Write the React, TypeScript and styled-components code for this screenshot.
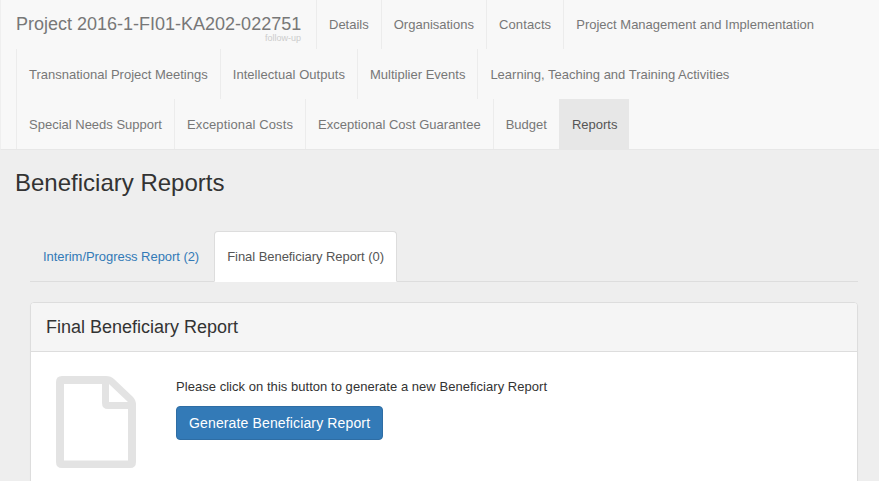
import React from 'react'
import styled, { createGlobalStyle } from 'styled-components'

const GlobalStyle = createGlobalStyle`
  html, body {
    margin: 0;
    height: 100%;
    overflow: hidden;
    background: #eeeeee;
    font-family: "Liberation Sans", Arial, sans-serif;
    font-size: 13px;
    line-height: 20px;
    color: #333333;
  }
  * {
    box-sizing: border-box;
  }
`

// tracking nudges a few labels to the widths seen in the reference
const NAV_ITEMS: { label: string; tracking?: number }[] = [
  { label: 'Details' },
  { label: 'Organisations' },
  { label: 'Contacts', tracking: 0.12 },
  { label: 'Project Management and Implementation' },
  { label: 'Transnational Project Meetings' },
  { label: 'Intellectual Outputs', tracking: 0.05 },
  { label: 'Multiplier Events' },
  { label: 'Learning, Teaching and Training Activities' },
  { label: 'Special Needs Support' },
  { label: 'Exceptional Costs', tracking: 0.12 },
  { label: 'Exceptional Cost Guarantee' },
  { label: 'Budget' },
  { label: 'Reports' },
]

const FileIcon = () => (
  <IconBox viewBox="0 0 80 92" width="80" height="92">
    <path
      fillRule="evenodd"
      fill="#e3e3e3"
      d="M6 0H50Q55 0 58 3L77 21Q80 24 80 29V86Q80 92 74 92H6Q0 92 0 86V6Q0 0 6 0ZM8 8V84.5H72V33H52Q46 33 46 27V8ZM53 8V26H72Z"
    />
  </IconBox>
)

const App: React.FC = () => {
  return (
    <>
      <GlobalStyle />
      <Navbar>
        <Brand>
          Project 2016-1-FI01-KA202-022751
          <BrandNote>follow-up</BrandNote>
        </Brand>
        {NAV_ITEMS.map((item) => (
          <NavItem key={item.label} $active={item.label === 'Reports'} $tracking={item.tracking}>
            {item.label}
          </NavItem>
        ))}
      </Navbar>
      <Page>
        <PageTitle>Beneficiary Reports</PageTitle>
        <Section>
          <Tabs>
            <Tab>Interim/Progress Report (2)</Tab>
            <Tab $active>Final Beneficiary Report (0)</Tab>
          </Tabs>
          <Panel>
            <PanelHead>Final Beneficiary Report</PanelHead>
            <PanelBody>
              <FileIcon />
              <div>
                <Hint>Please click on this button to generate a new Beneficiary Report</Hint>
                <PrimaryButton>Generate Beneficiary Report</PrimaryButton>
              </div>
            </PanelBody>
          </Panel>
        </Section>
      </Page>
    </>
  )
}

export default App

const Navbar = styled.nav`
  display: flex;
  flex-wrap: wrap;
  margin-top: -1px;
  padding-left: 15px;
  background-color: #f8f8f8;
  border-left: 1px solid #efefef;
  border-bottom: 1px solid #e7e7e7;
`

const Brand = styled.div`
  position: relative;
  width: 300px;
  height: 50px;
  padding-top: 15px;
  font-size: 18px;
  color: #777777;
  white-space: nowrap;
`

const BrandNote = styled.span`
  position: absolute;
  right: 15px;
  top: 35px;
  font-size: 9px;
  line-height: 8px;
  color: #cccccc;
`

const NavItem = styled.div<{ $active?: boolean; $tracking?: number }>`
  height: 50px;
  padding: 16px 12px 14px;
  white-space: nowrap;
  letter-spacing: ${({ $tracking }) => $tracking ?? 0}px;
  border-left: 1px solid ${({ $active }) => ($active ? '#e7e7e7' : '#ececec')};
  color: ${({ $active }) => ($active ? '#555555' : '#777777')};
  background-color: ${({ $active }) => ($active ? '#e7e7e7' : 'transparent')};
`

const Page = styled.main`
  padding: 0 15px;
`

const PageTitle = styled.h3`
  margin: 20px 0 10px;
  font-size: 24px;
  font-weight: 500;
  line-height: 26px;
  color: #333333;
`

const Section = styled.div`
  padding: 25px 6px 0 15px;
`

const Tabs = styled.div`
  display: flex;
  height: 51px;
  margin-bottom: 20px;
  border-bottom: 1px solid #dddddd;
`

const Tab = styled.div<{ $active?: boolean }>`
  height: 51px;
  margin-right: 2px;
  padding: 15px 12px;
  letter-spacing: -0.05px;
  border: 1px solid ${({ $active }) => ($active ? '#dddddd' : 'transparent')};
  border-bottom-color: transparent;
  border-radius: 4px 4px 0 0;
  color: ${({ $active }) => ($active ? '#555555' : '#337ab7')};
  background-color: ${({ $active }) => ($active ? '#ffffff' : 'transparent')};
`

const Panel = styled.section`
  background-color: #ffffff;
  border: 1px solid #dddddd;
  border-radius: 4px;
  box-shadow: 0 1px 1px rgba(0, 0, 0, 0.05);
`

const PanelHead = styled.header`
  height: 49px;
  padding: 14px 15px;
  font-size: 18px;
  line-height: 20px;
  color: #333333;
  background-color: #f5f5f5;
  border-bottom: 1px solid #dddddd;
  border-radius: 3px 3px 0 0;
`

const PanelBody = styled.div`
  display: flex;
  gap: 40px;
  padding: 24px 25px 40px;
`

const IconBox = styled.svg`
  display: block;
  flex: none;
`

const Hint = styled.p`
  margin: 1px 0 9px;
  letter-spacing: 0.04px;
  color: #333333;
`

const PrimaryButton = styled.button`
  display: block;
  height: 34px;
  padding: 6px 12px;
  font-family: inherit;
  font-size: 14px;
  line-height: 20px;
  letter-spacing: 0.14px;
  color: #ffffff;
  background-color: #337ab7;
  border: 1px solid #2e6da4;
  border-radius: 4px;
`
